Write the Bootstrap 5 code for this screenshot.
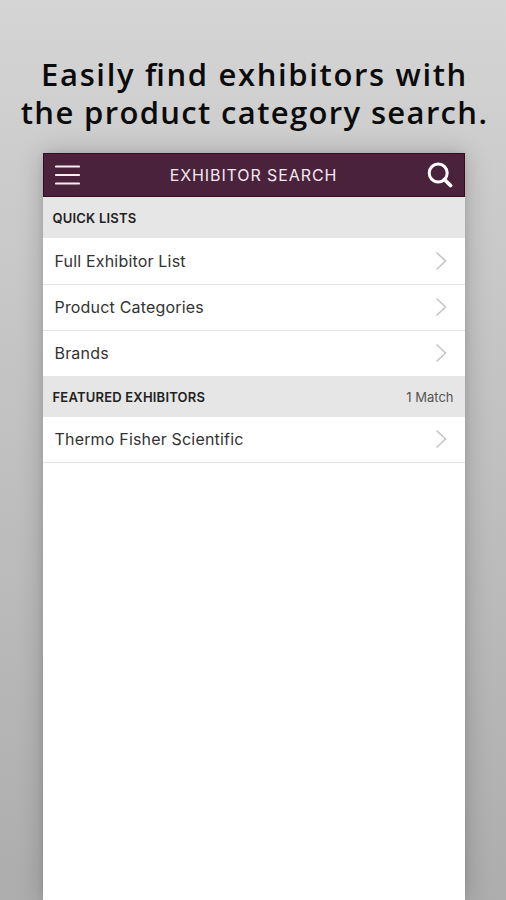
<!DOCTYPE html>
<html lang="en">
<head>
<meta charset="utf-8">
<meta name="viewport" content="width=device-width, initial-scale=1">
<title>Exhibitor Search</title>
<link rel="stylesheet" href="https://cdn.jsdelivr.net/npm/bootstrap@5.3.0/dist/css/bootstrap.min.css">
<style>
html, body { height: 900px; }
body { font-family: Inter, "Liberation Sans", sans-serif; color: #2b2b2b; background: linear-gradient(#d5d5d5, #cdcdcd 17%, #adadad); }
.headline { height: 153px; padding-top: 55px; padding-left: 3px; font-family: "Open Sans", "Noto Sans", sans-serif; font-size: 31px; font-weight: 600; line-height: 38px; color: #0b0b0b; letter-spacing: 1.65px; font-feature-settings: "liga" 1; }
.headline span { display: block; white-space: nowrap; }
.headline span + span { letter-spacing: 1.35px; }
.phone { width: 422px; height: 747px; margin-left: 42.5px; box-shadow: 0 1px 24px rgba(0,0,0,.22), 0 0 6px rgba(0,0,0,.08); }
.topbar { height: 44px; padding: 0 10px 0 11px; background: #4b223b; border: 1px solid #3a0a20; color: #f2e9ef; }
.topbar h1 { font-size: 16px; letter-spacing: .9px; font-weight: 400; padding-top: 1px; }
.section-head { background: #e6e6e6; padding: 2px 11px 0 10px; font-size: 13px; height: 41px; }
.section-head h2 { font-size: 13px; font-weight: 600; color: #222; letter-spacing: .2px; }
.row-link { height: 46px; padding: 0 18px 1px 12px; font-size: 16px; letter-spacing: .18px; border-bottom: 1.5px solid #e4e4e4; color: #333; text-decoration: none; }
.row-link.first { height: 47px; }
.row-link.final { border-bottom: 0; height: 45px; }
.match { color: #555; font-size: 13px; }
</style>
<script src="https://cdn.jsdelivr.net/npm/bootstrap@5.3.0/dist/js/bootstrap.bundle.min.js"></script>
</head>
<body class="overflow-hidden">
<header class="headline text-center"><span>Easily find exhibitors with</span><span>the product category search.</span></header>
<main class="phone bg-white">
  <nav class="topbar d-flex align-items-center justify-content-between">
    <svg width="25" height="22" stroke="#f5edf2" stroke-width="2.2" stroke-linecap="round"><path d="M1 2.5H24M1 11H24M1 19.5H24"/></svg>
    <h1 class="m-0">EXHIBITOR SEARCH</h1>
    <svg width="26" height="26" fill="none" stroke="#fff"><circle cx="11.2" cy="11" r="9" stroke-width="3"/><path d="M17.5 17.5L23.5 23.5" stroke-width="3.8" stroke-linecap="round"/></svg>
  </nav>
  <div class="section-head d-flex align-items-center justify-content-between"><h2 class="m-0">QUICK LISTS</h2></div>
  <div>
    <a href="#" class="row-link first d-flex align-items-center justify-content-between"><span>Full Exhibitor List</span><svg width="12" height="20" fill="none" stroke="#c4c4c4" stroke-width="1.5"><path d="M1.5 1.5L10.5 10L1.5 18.5"/></svg></a>
    <a href="#" class="row-link d-flex align-items-center justify-content-between"><span>Product Categories</span><svg width="12" height="20" fill="none" stroke="#c4c4c4" stroke-width="1.5"><path d="M1.5 1.5L10.5 10L1.5 18.5"/></svg></a>
    <a href="#" class="row-link final d-flex align-items-center justify-content-between"><span>Brands</span><svg width="12" height="20" fill="none" stroke="#c4c4c4" stroke-width="1.5"><path d="M1.5 1.5L10.5 10L1.5 18.5"/></svg></a>
  </div>
  <div class="section-head d-flex align-items-center justify-content-between"><h2 class="m-0">FEATURED EXHIBITORS</h2><span class="match">1 Match</span></div>
  <a href="#" class="row-link d-flex align-items-center justify-content-between"><span>Thermo Fisher Scientific</span><svg width="12" height="20" fill="none" stroke="#c4c4c4" stroke-width="1.5"><path d="M1.5 1.5L10.5 10L1.5 18.5"/></svg></a>
</main>
</body>
</html>
